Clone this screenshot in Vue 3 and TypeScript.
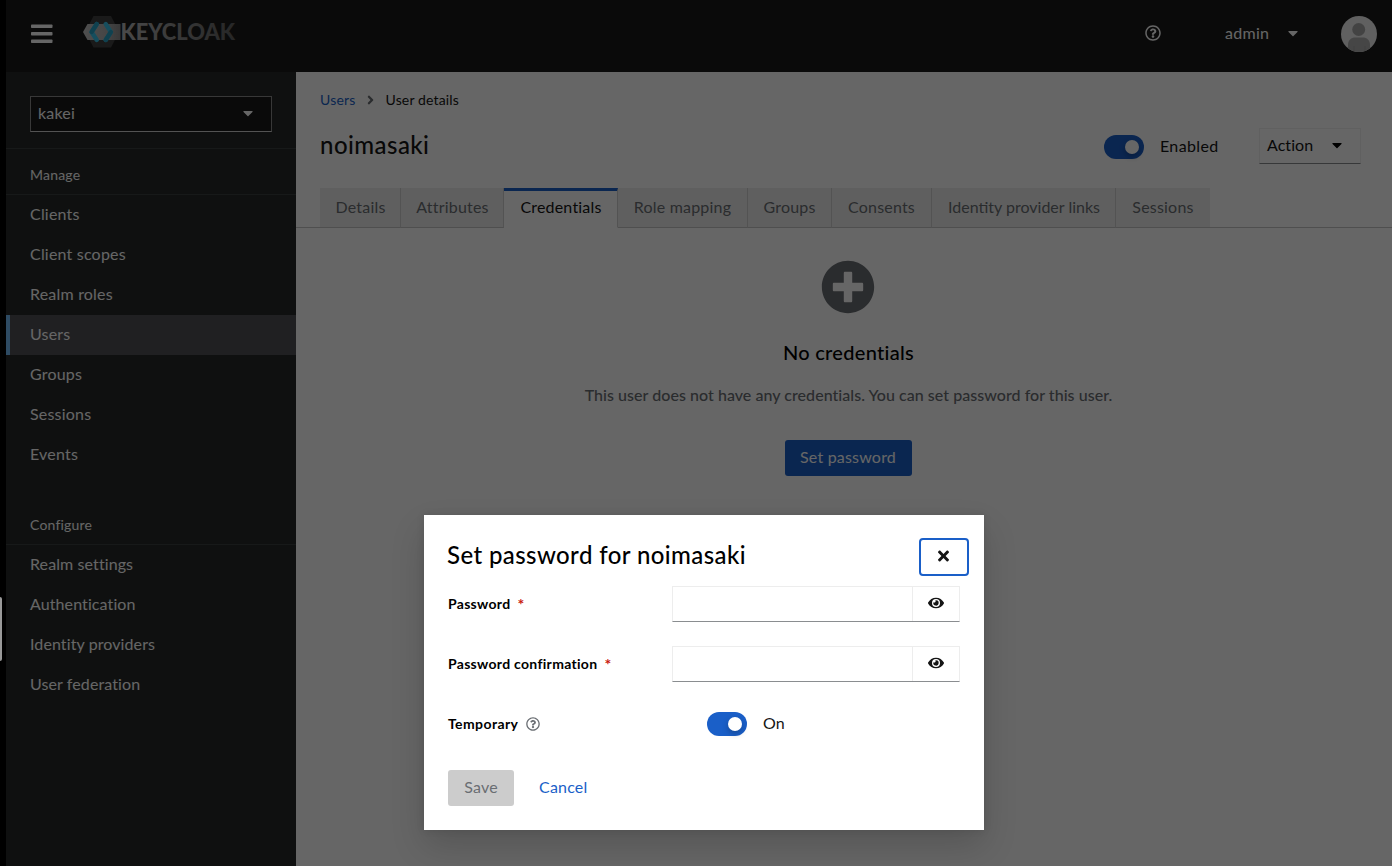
<script setup lang="ts">
interface NavItem { label: string; active?: boolean }
interface NavGroup { title: string; items: NavItem[] }
interface Tab { label: string; width: number; active?: boolean }

const groups: NavGroup[] = [
  {
    title: 'Manage',
    items: [
      { label: 'Clients' },
      { label: 'Client scopes' },
      { label: 'Realm roles' },
      { label: 'Users', active: true },
      { label: 'Groups' },
      { label: 'Sessions' },
      { label: 'Events' },
    ],
  },
  {
    title: 'Configure',
    items: [
      { label: 'Realm settings' },
      { label: 'Authentication' },
      { label: 'Identity providers' },
      { label: 'User federation' },
    ],
  },
]

const tabs: Tab[] = [
  { label: 'Details', width: 81 },
  { label: 'Attributes', width: 103 },
  { label: 'Credentials', width: 114, active: true },
  { label: 'Role mapping', width: 130 },
  { label: 'Groups', width: 84 },
  { label: 'Consents', width: 100 },
  { label: 'Identity provider links', width: 184 },
  { label: 'Sessions', width: 94 },
]

const fields: string[] = ['Password', 'Password confirmation']

const caret = 'M31.3 192h257.3c17.8 0 26.7 21.5 14.1 34.1L174.1 354.8c-7.8 7.8-20.5 7.8-28.3 0L17.2 226.1C4.6 213.5 13.5 192 31.3 192z'
const question = 'M256 8C119.043 8 8 119.083 8 256c0 136.997 111.043 248 248 248s248-111.003 248-248C504 119.083 392.957 8 256 8zm0 448c-110.532 0-200-89.431-200-200 0-110.495 89.472-200 200-200 110.491 0 200 89.471 200 200 0 110.53-89.431 200-200 200zm107.244-255.2c0 67.052-72.421 68.084-72.421 92.863V300c0 6.627-5.373 12-12 12h-45.647c-6.627 0-12-5.373-12-12v-8.659c0-35.745 27.1-50.034 47.579-61.516 17.561-9.845 28.324-16.541 28.324-29.579 0-17.246-21.999-28.693-39.784-28.693-23.189 0-33.894 10.977-48.942 29.969-4.057 5.12-11.46 6.071-16.666 2.124l-27.824-21.098c-5.107-3.872-6.251-11.066-2.644-16.363C184.846 131.491 214.94 112 261.794 112c49.071 0 101.45 38.304 101.45 88.8zM298 368c0 23.159-18.841 42-42 42s-42-18.841-42-42 18.841-42 42-42 42 18.841 42 42z'
const angle = 'M224.3 273l-136 136c-9.4 9.4-24.6 9.4-33.9 0l-22.6-22.6c-9.4-9.4-9.4-24.6 0-33.9l96.4-96.4-96.4-96.4c-9.4-9.4-9.4-24.6 0-33.9L54.3 103c9.4-9.4 24.6-9.4 33.9 0l136 136c9.5 9.4 9.5 24.6.1 34z'
const plusCircle = 'M256 8C119 8 8 119 8 256s111 248 248 248 248-111 248-248S393 8 256 8zm144 276c0 6.6-5.4 12-12 12h-92v92c0 6.6-5.4 12-12 12h-56c-6.6 0-12-5.4-12-12v-92h-92c-6.6 0-12-5.4-12-12v-56c0-6.6 5.4-12 12-12h92v-92c0-6.6 5.4-12 12-12h56c6.6 0 12 5.4 12 12v92h92c6.6 0 12 5.4 12 12v56z'
const times = 'M242.72 256l100.07-100.07c12.28-12.28 12.28-32.19 0-44.48l-22.24-22.24c-12.28-12.28-32.19-12.28-44.48 0L176 189.28 75.93 89.21c-12.28-12.28-32.19-12.28-44.48 0L9.21 111.45c-12.28 12.28-12.28 32.19 0 44.48L109.28 256 9.21 356.07c-12.28 12.28-12.28 32.19 0 44.48l22.24 22.24c12.28 12.28 32.2 12.28 44.48 0L176 322.72l100.07 100.07c12.28 12.28 32.2 12.28 44.48 0l22.24-22.24c12.28-12.28 12.28-32.19 0-44.48L242.72 256z'
const eye = 'M572.52 241.4C518.29 135.59 410.93 64 288 64S57.68 135.64 3.48 241.41a32.35 32.35 0 0 0 0 29.19C57.71 376.41 165.07 448 288 448s230.32-71.64 284.52-177.41a32.35 32.35 0 0 0 0-29.19zM288 400a144 144 0 1 1 144-144 143.93 143.93 0 0 1-144 144zm0-240a95.31 95.31 0 0 0-25.31 3.79 47.85 47.85 0 0 1-66.9 66.9A95.78 95.78 0 1 0 288 160z'
</script>

<template>
  <div class="screen">
    <div class="gutter"><div class="thumb"></div></div>
    <div class="page">
      <header class="masthead">
        <svg class="burger" width="22" height="20" viewBox="0 0 22 20" fill="#fff">
          <rect y="0.5" width="21.5" height="3.6" rx="0.8" />
          <rect y="8" width="21.5" height="3.6" rx="0.8" />
          <rect y="15.5" width="21.5" height="3.6" rx="0.8" />
        </svg>
        <svg class="logo" width="154" height="34" viewBox="0 0 154 34">
          <defs>
            <linearGradient id="word" x1="0" x2="1" y1="0" y2="0">
              <stop offset="0" stop-color="#b8b8b8" />
              <stop offset="1" stop-color="#606060" />
            </linearGradient>
            <linearGradient id="band" x1="0" x2="1" y1="0" y2="0">
              <stop offset="0" stop-color="#c4c4c4" />
              <stop offset="0.6" stop-color="#b0b0b0" />
              <stop offset="1" stop-color="#8c8c8c" />
            </linearGradient>
          </defs>
          <path d="M11.5 1h17.5l8 15.7-8 15.7H11.5L3.5 16.7z" fill="#424242" />
          <path d="M5.500 9H38.500v16H5.500L1 17z" fill="url(#band)" />
          <g fill="none" stroke-width="4.400" stroke-linecap="round" stroke-linejoin="round">
            <path d="M14.800 9L9.600 17l5.200 8" stroke="#38c4ea" />
            <path d="M23.700 9L28.900 17l-5.200 8" stroke="#38c4ea" />
            <path d="M14.800 9L9.600 17M28.900 17l-5.200 8" stroke="#2aa3c6" />
          </g>
          <text x="38.500" y="25" textLength="114.500" lengthAdjust="spacingAndGlyphs" fill="url(#word)">KEYCLOAK</text>
        </svg>
        <div class="tools">
          <svg class="help" width="16" height="16" viewBox="0 0 512 512"><path :d="question" /></svg>
          <span class="account">admin</span>
          <svg class="caret" width="10" height="16" viewBox="0 0 320 512"><path :d="caret" /></svg>
          <svg class="avatar" width="36" height="36" viewBox="0 0 36 36">
            <defs><clipPath id="round"><circle cx="18" cy="18" r="18" /></clipPath></defs>
            <g clip-path="url(#round)">
              <rect width="36" height="36" fill="#f0f0f0" />
              <circle cx="17.700" cy="13.500" r="6.500" fill="#a8a8a8" />
              <path d="M7 36v-7c0-5 3-7.500 7.500-7.500h7c4.500 0 7.500 2.500 7.500 7.500v7z" fill="#b0b0b0" />
              <path d="M13 36v-6M24 36v-6" stroke="#a2a2a2" stroke-width="1" />
            </g>
          </svg>
        </div>
      </header>

      <div class="body">
        <nav class="sidebar">
          <div class="realm">
            <div class="realm-select">
              <span>kakei</span>
              <svg class="caret" width="10" height="16" viewBox="0 0 320 512" fill="#fff"><path :d="caret" /></svg>
            </div>
          </div>
          <section v-for="g in groups" :key="g.title" class="group">
            <h2>{{ g.title }}</h2>
            <a v-for="i in g.items" :key="i.label" class="nav" :class="{ active: i.active }">{{ i.label }}</a>
          </section>
        </nav>

        <main class="main">
          <div class="crumbs">
            <a>Users</a>
            <svg width="7" height="14" viewBox="0 0 256 512" fill="#6a6e73"><path :d="angle" /></svg>
            <span>User details</span>
          </div>
          <div class="heading">
            <h1>noimasaki</h1>
            <div class="controls">
              <span class="switch"></span>
              <span class="enabled">Enabled</span>
              <div class="action">
                <span>Action</span>
                <svg class="caret" width="10" height="16" viewBox="0 0 320 512"><path :d="caret" /></svg>
              </div>
            </div>
          </div>
          <div class="tabs">
            <div v-for="t in tabs" :key="t.label" class="tab" :class="{ active: t.active }" :style="{ width: t.width + 'px' }">{{ t.label }}</div>
          </div>
          <div class="empty">
            <svg width="54" height="54" viewBox="0 0 512 512" fill="#6a6e73"><path :d="plusCircle" /></svg>
            <h3>No credentials</h3>
            <p>This user does not have any credentials. You can set password for this user.</p>
            <button class="primary">Set password</button>
          </div>
        </main>
      </div>
    </div>

    <div class="backdrop">
      <div class="modal">
        <div class="modal-head">
          <h2>Set password for noimasaki</h2>
          <button class="close"><svg width="11" height="16" viewBox="0 0 352 512" fill="#151515"><path :d="times" /></svg></button>
        </div>
        <div v-for="f in fields" :key="f" class="row">
          <label>{{ f }}<i>*</i></label>
          <div class="input">
            <div class="value"></div>
            <div class="reveal"><svg width="16" height="16" viewBox="0 0 576 512" fill="#151515"><path :d="eye" /></svg></div>
          </div>
        </div>
        <div class="row temp">
          <label>Temporary<svg width="14" height="14" viewBox="0 0 512 512" fill="#6a6e73"><path :d="question" /></svg></label>
          <div class="temp-value"><span class="switch"></span><span class="state">On</span></div>
        </div>
        <div class="actions">
          <button class="save">Save</button>
          <a>Cancel</a>
        </div>
      </div>
    </div>
  </div>
</template>

<style>
html, body { margin: 0; overflow: hidden; background: #000; }
</style>

<style scoped>
* { box-sizing: border-box; }
.screen {
  position: relative;
  display: flex;
  width: 1392px;
  height: 866px;
  overflow: hidden;
  background: #000;
  font: 16px/24px Lato, "Liberation Sans", sans-serif;
  letter-spacing: 0.2px;
}
svg { display: block; flex: none; }
h1, h2, h3, p { margin: 0; font-weight: 500; }
button { font: inherit; letter-spacing: inherit; border: 0; padding: 0; }
.gutter { position: relative; z-index: 1; width: 6px; flex: none; padding-top: 597px; }
.thumb { width: 2px; height: 64px; border-radius: 0 2px 2px 0; background: #999; }
.page { flex: 1; display: flex; flex-direction: column; min-width: 0; }
.masthead { height: 72px; flex: none; display: flex; align-items: flex-start; background: #1b1b1b; color: #fff; }
.burger { margin: 24px 0 0 25px; }
.logo { margin: 15px 0 0 29px; }
.logo text { font: 900 22px Lato, sans-serif; letter-spacing: 0; }
.tools { margin-left: auto; display: flex; align-items: center; height: 68px; padding-right: 15px; fill: #fff; }
.help { margin: -2px 64px 0 0; }
.account { width: 63px; padding-bottom: 2px; letter-spacing: 0.3px; }
.caret { margin-top: -2px; }
.avatar { margin-left: 43px; }
.body { flex: 1; display: flex; }
.sidebar { width: 290px; flex: none; background: #262a29; color: #fff; }
.realm { height: 77px; padding: 24px; border-bottom: 1px solid #3b403f; }
.realm-select {
  height: 36px; display: flex; align-items: center; justify-content: space-between;
  padding: 0 18px 0 7px; background: #1b1b1b; border: 1px solid #8c8c8c; border-bottom-color: #d0d0d0;
}
.realm-select span { padding-bottom: 2px; }
.group { margin-bottom: 30px; }
.group h2 { height: 46px; padding: 15px 24px 0; font-size: 14px; line-height: 22px; font-weight: 400; border-bottom: 1px solid #3b403f; }
.group + .group h2 { height: 40px; padding-top: 9px; }
.nav { display: block; height: 40px; padding: 7px 24px 9px; }
.group + .group .nav { letter-spacing: 0.1px; }
.nav.active { background: #505055; border-left: 4px solid #73bcf7; padding-left: 20px; }
.main { flex: 1; background: #fff; color: #151515; }
.crumbs { display: flex; align-items: center; height: 22px; margin: 17px 0 0 24px; font-size: 14px; }
.crumbs a { color: #1a5fc8; }
.crumbs svg { margin: 0 12px 0 11px; }
.crumbs span { letter-spacing: 0.15px; }
.heading { display: flex; justify-content: space-between; align-items: flex-start; height: 77px; padding: 17px 31px 0 24px; }
h1 { font-size: 24px; line-height: 34px; letter-spacing: 0.45px; }
.controls { display: flex; align-items: center; }
.switch { display: flex; justify-content: flex-end; width: 40px; height: 24px; padding: 5px; border-radius: 12px; background: #1a5fc8; }
.switch::before { content: ""; width: 14px; height: 14px; border-radius: 50%; background: #fff; box-shadow: 0 3px 6px rgba(3, 3, 3, 0.25); }
.controls .switch { margin-top: 2px; }
.enabled { margin-left: 16px; width: 99px; letter-spacing: 0.35px; }
.action { display: flex; justify-content: space-between; align-items: center; width: 102px; height: 36px; padding: 0 18px 0 7px; border: 1px solid #efefef; border-bottom-color: #8a8d90; }
.action span { padding-bottom: 2px; letter-spacing: 0.05px; }
.tabs { display: flex; height: 40px; padding-left: 24px; box-shadow: inset 0 -1px #c6c6c6; }
.tab { height: 40px; text-align: center; line-height: 37px; letter-spacing: 0.2px; background: #eee; color: #6a6e73; border-right: 1px solid #cfcfcf; border-bottom: 1px solid #c6c6c6; white-space: nowrap; }
.tab:nth-child(-n + 3) { padding-left: 1px; }
.tab:nth-child(7) { padding-left: 1px; letter-spacing: 0; }
.tab:last-child { border-right: 0; }
.tab.active { background: #fff; color: #151515; border-top: 3px solid #1a5fc8; border-bottom-color: #fff; line-height: 31px; }
.empty { display: flex; flex-direction: column; align-items: center; padding: 32px 0 0 8px; }
.empty h3 { margin-top: 23px; padding-left: 1px; font-size: 20px; line-height: 30px; letter-spacing: 0.3px; color: #000; }
.empty p { margin-top: 16px; padding-left: 1px; letter-spacing: 0.04px; color: #6a6e73; }
.primary { width: 127px; height: 36px; margin-top: 33px; padding-bottom: 2px; border-radius: 3px; background: #1a5fc8; color: #fff; }
.backdrop { position: absolute; inset: 0; background: rgba(0, 0, 0, 0.6); }
.modal { position: absolute; left: 424px; top: 515px; width: 560px; height: 315px; padding: 23px 24px 0; background: #fff; color: #151515; box-shadow: 0 16px 32px rgba(3, 3, 3, 0.16), 0 0 8px rgba(3, 3, 3, 0.1); }
.modal-head { display: flex; justify-content: space-between; height: 48px; margin: 0 -9px 0 -1px; }
.modal-head h2 { font-size: 24px; line-height: 33px; letter-spacing: 0.4px; color: #000; }
.close { display: flex; align-items: center; justify-content: center; width: 50px; height: 38px; padding: 0 1px 2px 0; border: 2px solid #1a5fc8; border-radius: 4px; background: #fff; }
.row { display: flex; height: 60px; }
.row label { display: flex; width: 224px; font-size: 14px; line-height: 36px; font-weight: 700; letter-spacing: 0.3px; color: #000; }
.row i { margin-left: 7px; font-size: 16px; font-style: normal; font-weight: 700; color: #c9190b; }
.input { display: flex; width: 288px; height: 36px; border: 1px solid #ededed; border-bottom-color: #8a8d90; }
.value { width: 239px; }
.reveal { flex: 1; display: flex; justify-content: center; border-left: 1px solid #ededed; padding-top: 8px; }
.temp label { letter-spacing: 0.4px; }
.temp label svg { margin: 11px 0 0 8px; }
.temp-value { display: flex; align-items: center; height: 36px; gap: 16px; padding-left: 35px; }
.state { padding-bottom: 2px; }
.actions { display: flex; align-items: center; margin-top: 4px; height: 36px; }
.save { width: 66px; height: 36px; padding-bottom: 2px; border-radius: 3px; background: #ccc; color: #6a6e73; }
.actions a { margin-left: 25px; padding-bottom: 2px; color: #1a5fc8; }
</style>
